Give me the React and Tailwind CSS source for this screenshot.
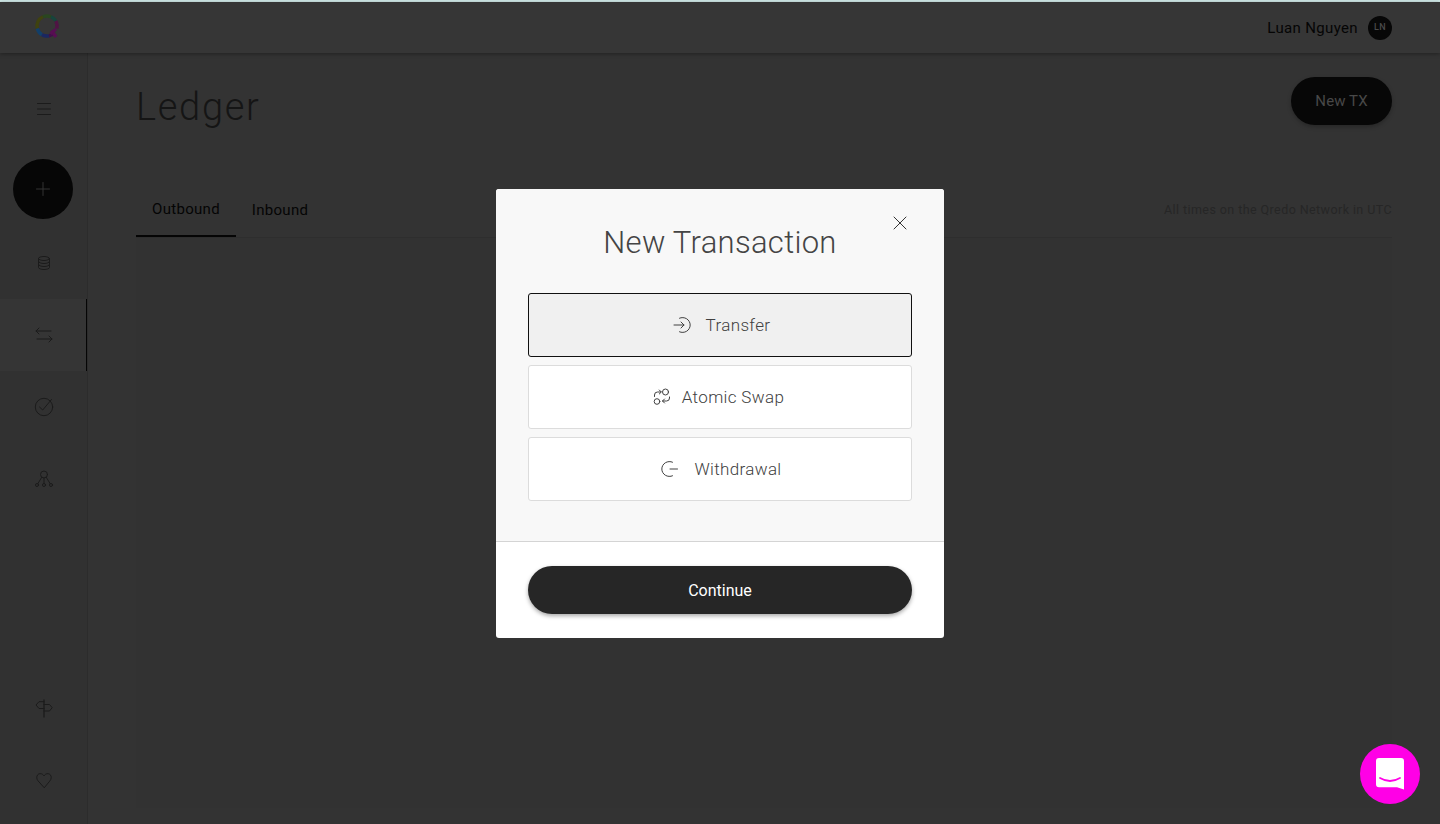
import React from "react";

const S = ({ children, className = "", size = 20, vb = "0 0 20 20", sw = 1 }) => (
  <svg width={size} height={size} viewBox={vb} fill="none" stroke="currentColor" strokeWidth={sw} strokeLinecap="round" strokeLinejoin="round" className={className}>
    {children}
  </svg>
);

const Logo = () => (
  <svg width="26" height="26" viewBox="0 0 26 26" fill="none" strokeWidth="3.400" className="mb-[3px]">
    <path d="M3.300 15.500 A10 10 0 0 1 9 3.800" stroke="#3f420f" />
    <path d="M9 3.800 A10 10 0 0 1 17 3.800" stroke="#2a4620" />
    <path d="M17 3.800 A10 10 0 0 1 21.800 8" stroke="#16453c" />
    <path d="M21.800 8 A10 10 0 0 1 22.700 15.500" stroke="#501344" />
    <path d="M3.300 15.500 A10 10 0 0 0 8 21.700" stroke="#123f69" />
    <path d="M8 21.700 A10 10 0 0 0 15 22.800" stroke="#1a2762" />
    <path d="M15 22.800 A10 10 0 0 0 19 21" stroke="#410f4b" />
    <path d="M17.500 17.500 L22 24" stroke="#570e53" strokeWidth="3.400" />
    <path d="M22 16 L16.500 21" stroke="#570e53" strokeWidth="3" />
  </svg>
);

const NavRow = ({ active, children }) => (
  <div className={`h-[72px] flex items-center justify-center ${active ? "bg-[#353535] border-r border-[#050505] pl-[2px]" : "pl-[1px]"}`}>
    {children}
  </div>
);

const Choice = ({ active, icon, label, offset = "pl-[3px]" }) => (
  <button className={`h-16 w-full rounded-[3px] border flex items-center justify-center text-[#414141] ${offset} ${active ? "bg-[#f0f0f0] border-[#111]" : "bg-white border-[#dcdcdc]"}`}>
    {icon}
    <span className="text-[17px] font-light pt-[2px] tracking-[0.35px]">{label}</span>
  </button>
);

export default function App() {
  return (
    <div className="relative h-[824px] w-[1440px] overflow-hidden bg-[#333333] font-['Roboto',sans-serif]">
      <div className="h-[2px] bg-[#cfe8e6]" />
      <header className="h-[51px] bg-[#363636] flex items-center justify-between pl-[34px] pr-[48px] shadow-[0_1px_4px_rgba(0,0,0,0.35)] relative">
        <Logo />
        <div className="flex items-center gap-[10px]">
          <span className="text-[15px] tracking-[0.35px] text-[#050505] pt-[2px]">Luan Nguyen</span>
          <span className="w-6 h-6 rounded-full bg-[#070707] text-[#4a4a4a] text-[9px] font-medium tracking-[0.5px] flex items-center justify-center">LN</span>
        </div>
      </header>

      <div className="flex h-[771px]">
        <aside className="w-[88px] shrink-0 bg-[#313131] border-r border-[#2c2c2c] flex flex-col text-[#1b1b1b]">
          <div className="h-[72px] mt-[20px] flex items-center justify-center pl-[1px]">
            <S size={16} vb="0 0 16 16"><path d="M1.500 2.500h13M1.500 8h13M1.500 13.500h13" /></S>
          </div>
          <div className="h-[60px] mt-[14px] ml-[13px] w-[60px] rounded-full bg-[#060606] flex items-center justify-center text-[#333333]">
            <S size={16} vb="0 0 16 16"><path d="M8 1.500v13M1.500 8h13" /></S>
          </div>
          <div className="mt-[8px]">
            <NavRow>
              <S size={16} vb="0 0 16 16">
                <ellipse cx="8" cy="3.500" rx="5.500" ry="2" />
                <path d="M2.500 3.500v9c0 1.100 2.500 2 5.500 2s5.500-.9 5.500-2v-9M2.500 6.500c0 1.100 2.500 2 5.500 2s5.500-.9 5.500-2M2.500 9.500c0 1.100 2.500 2 5.500 2s5.500-.9 5.500-2" />
              </S>
            </NavRow>
            <NavRow active>
              <S size={18} vb="0 0 18 18">
                <path d="M16 5H1M4 2 1 5l3 3" />
                <path d="M2 13H17M14 10l3 3-3 3" />
              </S>
            </NavRow>
            <NavRow>
              <S size={20}>
                <circle cx="10" cy="10" r="8.700" />
                <path d="M5.500 10 8.700 13 17.500 2.500" />
              </S>
            </NavRow>
            <NavRow>
              <S size={20}>
                <circle cx="10" cy="5.500" r="3.500" />
                <circle cx="3" cy="16" r="1.500" /><circle cx="10" cy="16" r="1.500" /><circle cx="17" cy="16" r="1.500" />
                <path d="M7.800 8.200 3.800 14.700M10 9v5.500M12.200 8.200l4 6.500" />
              </S>
            </NavRow>
          </div>
          <div className="mt-auto mb-[8px]">
            <NavRow>
              <S size={20}>
                <path d="M10 2v17" strokeWidth="1.300" />
                <path d="M10 3.700H5L2 7l3 3.500h5M10 6.500h5.500L18.200 9.700 15.500 13H10" />
              </S>
            </NavRow>
            <NavRow>
              <S size={18} vb="0 0 18 18">
                <path d="M9 16.500 3 9.800C1.500 8 1.300 5.500 2.700 3.800c1.600-1.800 4.800-1.500 6.300 1.100 1.500-2.600 4.700-2.900 6.300-1.100 1.400 1.700 1.200 4.200-.3 6z" />
              </S>
            </NavRow>
          </div>
        </aside>

        <main className="flex-1 pl-[48px] pr-[48px] bg-[#333333]">
          <div className="flex items-start justify-between pt-[24px]">
            <h1 className="text-[38px] leading-[56px] tracking-[1.700px] font-light text-[#151515] mt-[2px]">Ledger</h1>
            <button className="w-[101px] h-[48px] pt-[1px] rounded-full bg-[#070707] text-[#484848] text-[15px] tracking-[0.1px] shadow-[0_2px_4px_rgba(0,0,0,0.25)]">New TX</button>
          </div>
          <div className="mt-[41px] flex items-end justify-between border-b border-[#2e2e2e] h-[62px]">
            <div className="flex h-full">
              <div className="w-[100px] h-full pt-[8px] flex items-center justify-center border-b-2 border-[#050505] mb-[-1px] text-[15px] tracking-[0.3px] text-[#050505]">Outbound</div>
              <div className="w-[88px] h-full pt-[7px] flex items-center justify-center text-[15px] tracking-[0.3px] text-[#050505]">Inbound</div>
            </div>
            <div className="h-full pt-[8px] flex items-center text-[12.500px] tracking-[0.42px] text-[#262626]">All times on the Qredo Network in UTC</div>
          </div>
          <div className="h-[570px] bg-[#323232]" />
        </main>
      </div>

      {/* Modal overlay */}
      <div className="absolute inset-0 flex items-center justify-center pt-[3px]">
        <div className="w-[448px] rounded-[3px] overflow-hidden bg-white">
          <div className="relative bg-[#f8f8f8] px-8 pt-[32px] pb-[40px] border-b border-[#d4d4d4]">
            <button className="absolute top-[27px] right-[37px] text-[#333]">
              <S size={14} vb="0 0 14 14"><path d="M1 1l12 12M13 1 1 13" /></S>
            </button>
            <h2 className="text-center text-[31px] leading-[44px] font-light tracking-[0.3px] text-[#444]">New Transaction</h2>
            <div className="mt-[28px] flex flex-col gap-2">
              <Choice active label="Transfer" icon={
                <S size={18} vb="0 0 18 18" className="mr-[15px]">
                  <path d="M6.500 2.200A7.500 7.500 0 1 1 6.500 15.800" /><path d="M1 9h10M8 6l3 3-3 3" />
                </S>} />
              <Choice label="Atomic Swap" offset="pr-[3px]" icon={
                <S size={18} vb="0 0 18 18" className="mr-[11px]">
                  <circle cx="12.500" cy="4" r="3" /><circle cx="4" cy="13.500" r="2.800" />
                  <path d="M1.500 8.500V7a3 3 0 0 1 3-3H8M6.300 2 8.300 4l-2 2" />
                  <path d="M16.500 9v1a3 3 0 0 1-3 3H9.500M11.500 11l-2 2 2 2" />
                </S>} />
              <Choice label="Withdrawal" icon={
                <S size={18} vb="0 0 18 18" className="mr-[15px]">
                  <path d="M11.500 2.200A7.500 7.500 0 1 0 11.500 15.800" /><path d="M9 9h7.500" />
                </S>} />
            </div>
          </div>
          <div className="px-8 pt-[24px] pb-[24px]">
            <button className="w-full h-12 pt-[2px] rounded-full bg-[#262626] text-white text-[16px] shadow-[0_2px_4px_rgba(0,0,0,0.35)]">Continue</button>
          </div>
        </div>
      </div>

      <button className="absolute right-[20px] bottom-[20px] w-[60px] h-[60px] rounded-full bg-[#ff00e6] flex items-center justify-center">
        <svg width="28" height="32" viewBox="0 0 28 32">
          <path d="M3 0h22a3 3 0 0 1 3 3v28.500L21 29.300H3a3 3 0 0 1-3-3V3a3 3 0 0 1 3-3z" fill="#fff" />
          <path d="M4 20q10 6 20 0" fill="none" stroke="#ff00e6" strokeWidth="1.800" strokeLinecap="round" />
        </svg>
      </button>
    </div>
  );
}
